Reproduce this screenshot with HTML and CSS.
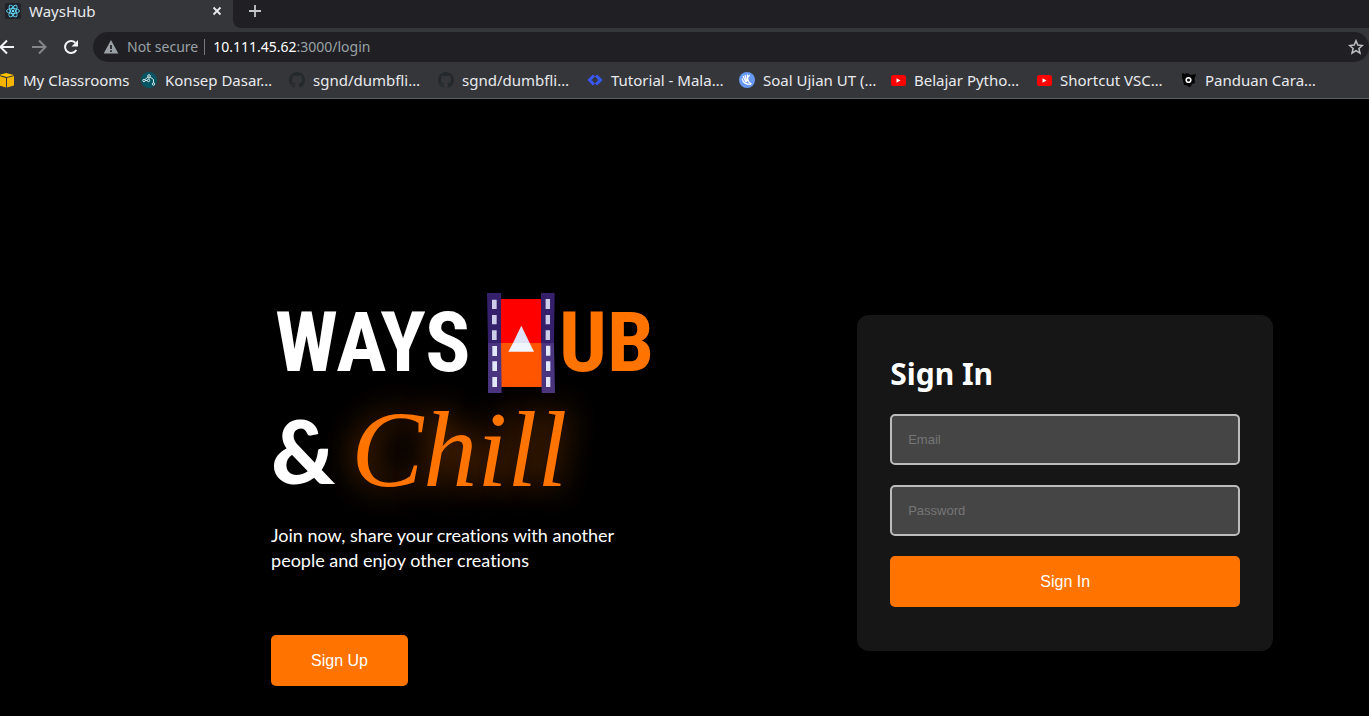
FILE: index.html
```
<!DOCTYPE html>
<html lang="en">
<head>
<meta charset="utf-8">
<title>WaysHub</title>
<link rel="stylesheet" href="styles.css">
</head>
<body>
<header class="browser">
  <div class="tabstrip">
    <div class="tab">
      <svg class="icon" viewBox="0 0 16 16"><rect width="16" height="16" rx="2" fill="#20232a"/><g fill="none" stroke="#61dafb" stroke-width=".9"><ellipse cx="8" cy="8" rx="6.5" ry="2.5"/><ellipse cx="8" cy="8" rx="6.5" ry="2.5" transform="rotate(60 8 8)"/><ellipse cx="8" cy="8" rx="6.5" ry="2.5" transform="rotate(120 8 8)"/></g><circle cx="8" cy="8" r="1.3" fill="#61dafb"/></svg>
      <span class="tab-title">WaysHub</span>
      <button class="plain" type="button" aria-label="Close tab"><svg class="icon" viewBox="0 0 16 16"><path d="M4.500 4.500l7 7m0-7l-7 7" stroke="#e8eaed" stroke-width="1.800"/></svg></button>
    </div>
    <div class="strip-rest">
      <button class="plain" type="button" aria-label="New tab"><svg class="icon" viewBox="0 0 16 16"><path d="M8 2v12M2 8h12" stroke="#c4c6cc" stroke-width="1.800"/></svg></button>
    </div>
  </div>
  <div class="toolbar">
    <div class="nav">
      <button class="plain" type="button" aria-label="Back"><svg class="icon" viewBox="0 0 16 16"><path d="M14 8H1M7 1.500L.5 8 7 14.500" fill="none" stroke="#f1f3f4" stroke-width="2"/></svg></button>
      <button class="plain" type="button" aria-label="Forward"><svg class="icon" viewBox="0 0 16 16"><path d="M0 8h13M7 1.500L13.500 8 7 14.500" fill="none" stroke="#85868a" stroke-width="2"/></svg></button>
      <button class="plain" type="button" aria-label="Reload"><svg class="icon" viewBox="0 0 16 16"><path d="M12.300 11A6 6 0 1 1 11.300 3.700" fill="none" stroke="#f1f3f4" stroke-width="2"/><path d="M14 1v6.500H7.500z" fill="#f1f3f4"/></svg></button>
    </div>
    <div class="address">
      <svg class="icon" viewBox="0 0 16 16"><path d="M8 1l7.300 13.500H.7z" fill="#9aa0a6"/><path d="M8 6v4m0 1.300v1.700" stroke="#202124" stroke-width="1.700"/></svg>
      <span class="secure">Not secure</span>
      <span class="url"><b>10.111.45.62</b>:3000/login</span>
      <button class="plain star" type="button" aria-label="Bookmark this page"><svg class="icon" viewBox="0 0 16 16"><path d="M8 1.800l1.800 4.300 4.600.4-3.500 3 1.100 4.600L8 11.700l-4 2.400 1.100-4.600-3.500-3 4.600-.4z" fill="none" stroke="#bdc1c6" stroke-width="1.500"/></svg></button>
    </div>
  </div>
  <nav class="bookmarks">
    <a href="#"><svg class="icon" viewBox="0 0 16 16"><path d="M0 3L7 1l8 2-7 2z" fill="#ffc400"/><path d="M0 4l7 2v9.500L0 13.500zM8 6l7-2v9.500l-7 2z" fill="#f4b400"/></svg>My Classrooms</a>
    <a href="#"><svg class="icon" viewBox="0 0 16 16"><circle cx="8" cy="8" r="8" fill="#075563"/><g fill="none" stroke="#d6e9eb" stroke-width="1"><circle cx="8" cy="4" r="1.300"/><circle cx="3" cy="8.500" r="1.200"/><circle cx="7.500" cy="8.500" r="1.200"/><circle cx="12.500" cy="12" r="1.200"/><path d="M8 5.300v2M4 7.500l3-2.500M9 5l3.500 2.500v3.300M4.200 8.500h2"/></g></svg>Konsep Dasar…</a>
    <a href="#"><svg class="icon" viewBox="0 0 16 16"><use href="#github"/></svg>sgnd/dumbfli…</a>
    <a href="#"><svg class="icon" viewBox="0 0 16 16"><path id="github" fill="#24292e" d="M8 0C3.580 0 0 3.580 0 8c0 3.540 2.290 6.530 5.470 7.590.4.070.55-.17.55-.38v-1.490c-2.010.37-2.530-.49-2.690-.94-.09-.23-.48-.94-.82-1.130-.28-.15-.68-.52-.01-.53.63-.01 1.080.58 1.230.82.72 1.210 1.870.87 2.330.66.070-.52.28-.87.51-1.070-1.780-.2-3.640-.89-3.640-3.950 0-.87.31-1.590.82-2.150-.08-.2-.36-1.020.08-2.120 0 0 .67-.21 2.200.82a7.400 7.400 0 0 1 4 0c1.530-1.040 2.200-.82 2.200-.82.44 1.100.16 1.920.08 2.120.51.56.82 1.270.82 2.150 0 3.070-1.870 3.750-3.650 3.950.29.25.54.73.54 1.480v2.200c0 .21.15.46.55.38A8 8 0 0 0 16 8c0-4.420-3.580-8-8-8z"/></svg>sgnd/dumbfli…</a>
    <a href="#"><svg class="icon" viewBox="0 0 16 16"><path d="M7 3.500L2.500 8 7 12.500M9 3.500L13.500 8 9 12.500" fill="none" stroke="#3858f6" stroke-width="3"/></svg>Tutorial - Mala…</a>
    <a href="#"><svg class="icon" viewBox="0 0 16 16"><circle cx="8" cy="8" r="8" fill="#6899f5"/><path d="M4 4l3 6M6 3l2 7M8.500 2.500L8.500 9M3 6.500c1 4 4 6 9 6M10.500 3C7.500 6 8.500 10 12.500 12" fill="none" stroke="#fff" stroke-width="1.200"/></svg>Soal Ujian UT (…</a>
    <a href="#"><svg class="icon" viewBox="0 0 16 16"><g id="video"><rect x="1" y="3" width="15" height="11" rx="2.500" fill="#f00"/><path d="M6.500 6.200l4 2.300-4 2.300z" fill="#fff"/></g></svg>Belajar Pytho…</a>
    <a href="#"><svg class="icon" viewBox="0 0 16 16"><use href="#video"/></svg>Shortcut VSC…</a>
    <a href="#"><svg class="icon" viewBox="0 0 16 16"><path d="M1 1l3 1 2-1 4 2 5-1-1.500 5L14 11l-3 1-2 3.500-3-2-3-.5-1-4.500-1-3z" fill="#050505"/><circle cx="7.500" cy="8" r="2.300" fill="none" stroke="#fff" stroke-width="1.600"/></svg>Panduan Cara…</a>
  </nav>
</header>
<main class="page">
  <section class="hero">
    <h1 class="brand">
      <span class="brand-row">
        <span class="ways">WAYS</span>
        <svg class="film" viewBox="51 39 204 300" role="img" aria-label="H">
          <path d="M93 57h121v132H93z" fill="#f00"/><path d="M93 189h123v132H93z" fill="#ff5500"/>
          <path d="M51 39h42v150H54zM213 39h41l-2 150h-38z" fill="#34206b"/>
          <path d="M54 189h39l2 150H54zM214 189h38l3 150h-40z" fill="#493580"/>
          <path d="M66 59h14v28H66zM66 105h14v28H66zM66 151h14v29H66zM227 57h13v30h-13zM227 105h13v28h-13zM227 151h13v29h-13z" fill="#cdcde9"/>
          <path d="M67 198h14v30H67zM67 244h14v29H67zM67 291h14v30H67zM228 197h13v30h-13zM228 244h13v29h-13zM228 291h13v30h-13z" fill="#e2e8fa"/>
          <path d="M154 137l25 52h-50z" fill="#dfe3f5"/><path d="M129 189h50l13 26h-77z" fill="#f0f5ff"/>
        </svg>
        <span class="ub">UB</span>
      </span>
      <span class="chill-row"><span class="amp">&amp;</span><span class="chill">Chill</span></span>
    </h1>
    <p class="tagline">Join now, share your creations with another<br>people and enjoy other creations</p>
    <button class="action sign-up" type="button">Sign Up</button>
  </section>
  <form class="card">
    <h2 class="card-title">Sign In</h2>
    <input class="field" type="email" placeholder="Email" aria-label="Email">
    <input class="field" type="password" placeholder="Password" aria-label="Password">
    <button class="action" type="button">Sign In</button>
  </form>
</main>
</body>
</html>
```
FILE: styles.css
```
* { box-sizing: border-box; }
body {
  margin: 0;
  min-height: 100vh;
  background: #000;
  color: #fff;
  font-family: "Noto Sans", "Open Sans", sans-serif;
  overflow-x: hidden;
}
.icon { display: block; width: 16px; height: 16px; flex: none; }
.plain { padding: 0; border: 0; background: none; }

.browser { background: #35363a; border-bottom: 1px solid #5f6064; color: #e8eaed; font-size: 15px; line-height: 18px; }
.tabstrip { display: flex; height: 28px; }
.tab { display: flex; align-items: center; gap: 8px; width: 233px; padding: 0 8px 6px 5px; }
.tab-title { flex: 1; }
.strip-rest { flex: 1; padding: 3px 14px; background: #202024; border-bottom-left-radius: 8px; }
.toolbar { display: flex; align-items: center; height: 38px; }
.nav { display: flex; gap: 16px; width: 93px; }
.nav .plain { width: 16px; }
.address { display: flex; flex: 1; align-items: center; height: 30px; padding: 0 5px 0 10px; border-radius: 15px; background: #202024; color: #9aa0a6; font-size: 14px; }
.secure { margin-left: 8px; padding-right: 6px; border-right: 1px solid #75777b; line-height: 16px; }
.url { margin-left: 8px; }
.url b { color: #fff; font-weight: 400; }
.star { margin-left: auto; }
.bookmarks { display: grid; grid-template-columns: 142px 148px 149px 149px 152px 151px 146px 145px auto; height: 32px; padding-bottom: 4px; margin-left: -1px; }
.bookmarks a { display: flex; align-items: center; gap: 8px; color: inherit; text-decoration: none; white-space: nowrap; }

.page { display: flex; justify-content: space-between; align-items: flex-start; padding: 194px 7% 30px 19.8%; }
.hero { width: 400px; }
.brand { margin: 0; font-weight: 700; font-family: "Roboto Condensed", "Liberation Sans", sans-serif; }
.brand-row { display: flex; align-items: center; height: 100px; padding-left: 4px; font-size: 84px; line-height: 100px; }
.ways { width: 212px; }
.film { width: 68px; height: 100px; }
.ub { margin-left: 4px; color: #ff7300; }
.chill-row { display: flex; align-items: center; gap: 16px; height: 130px; padding-bottom: 16px; line-height: 110px; }
.amp { font-family: Lato, sans-serif; font-weight: 900; font-size: 88px; }
.chill { color: #ff7300; font-family: "Liberation Serif", serif; font-style: italic; font-weight: 400; font-size: 108px; text-shadow: 0 0 32px rgba(255, 115, 0, 0.6); }
.tagline { margin: 0 0 62px; font-family: Lato, sans-serif; font-size: 18px; line-height: 25px; font-variant-ligatures: none; }
.action { height: 51px; border: 0; border-radius: 5px; background: #ff7300; color: #fff; font: 16px "Liberation Sans", sans-serif; }
.sign-up { width: 137px; }
.card { display: flex; flex-direction: column; gap: 20px; width: 416px; margin-top: 22px; padding: 39px 33px 44px; border-radius: 12px; background: #161616; }
.card-title { margin: 0; font-size: 30px; line-height: 40px; }
.field { height: 51px; padding: 0 16px; border: 2px solid #bcbcbc; border-radius: 5px; background: #454545; color: #fff; font: 13px "Liberation Sans", sans-serif; }
.field::placeholder { color: #757575; }
```
